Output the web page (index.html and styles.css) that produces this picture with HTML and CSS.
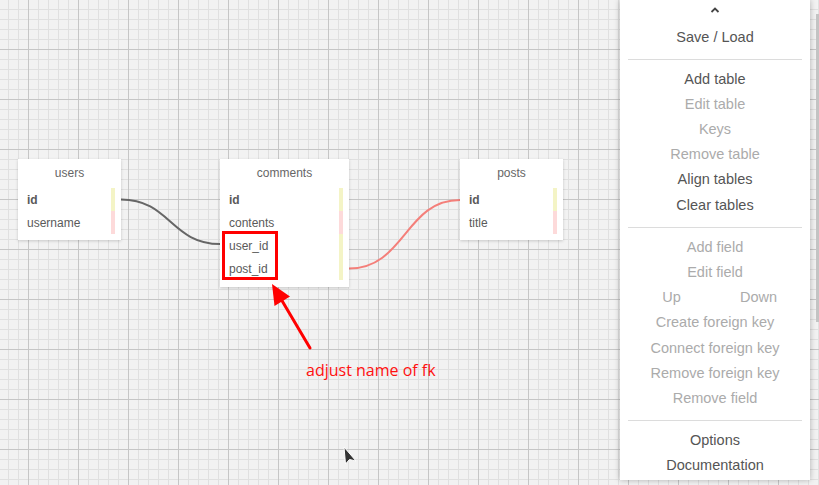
FILE: index.html
```html
<!DOCTYPE html>
<html>
<head>
<meta charset="utf-8">
<link rel="stylesheet" href="styles.css">
</head>
<body>
<div class="canvas">
  <svg class="links" width="819" height="485" viewBox="0 0 819 485">
    <path d="M121 199.5 C170 199.5 171 244 220 244" class="link link-dark"/>
    <path d="M349 268.5 C405 268.5 405 200 460 200" class="link link-red"/>
  </svg>

  <div class="table t-users">
    <div class="tname">users</div>
    <div class="row"><span class="fname pk">id</span><i class="key k-pk"></i></div>
    <div class="row"><span class="fname">username</span><i class="key k-field"></i></div>
  </div>

  <div class="table t-comments">
    <div class="tname">comments</div>
    <div class="row"><span class="fname pk">id</span><i class="key k-pk"></i></div>
    <div class="row"><span class="fname">contents</span><i class="key k-field"></i></div>
    <div class="row"><span class="fname">user_id</span><i class="key k-pk"></i></div>
    <div class="row"><span class="fname">post_id</span><i class="key k-pk"></i></div>
  </div>

  <div class="table t-posts">
    <div class="tname">posts</div>
    <div class="row"><span class="fname pk">id</span><i class="key k-pk"></i></div>
    <div class="row"><span class="fname">title</span><i class="key k-field"></i></div>
  </div>

  <svg class="annot" width="819" height="485" viewBox="0 0 819 485">
    <rect x="223.5" y="232.5" width="53" height="46" fill="none" stroke="#ff0000" stroke-width="3"/>
    <line x1="310" y1="348" x2="281" y2="299" stroke="#ff0000" stroke-width="3" stroke-linecap="round"/>
    <polygon points="272,284 290,296.6 274.5,306" fill="#ff0000"/>
  </svg>
  <div class="note">adjust name of fk</div>

  <div class="menu">
    <div class="collapse">
      <svg width="10" height="6" viewBox="0 0 10 6"><path d="M1.5 5 L5 1.5 L8.5 5" fill="none" stroke="#444" stroke-width="1.8"/></svg>
    </div>
    <div class="item">Save / Load</div>
    <div class="sep"></div>
    <div class="item">Add table</div>
    <div class="item off">Edit table</div>
    <div class="item off">Keys</div>
    <div class="item off">Remove table</div>
    <div class="item">Align tables</div>
    <div class="item">Clear tables</div>
    <div class="sep"></div>
    <div class="item off">Add field</div>
    <div class="item off">Edit field</div>
    <div class="item-pair">
      <div class="item off">Up</div>
      <div class="item off">Down</div>
    </div>
    <div class="item off">Create foreign key</div>
    <div class="item off">Connect foreign key</div>
    <div class="item off">Remove foreign key</div>
    <div class="item off">Remove field</div>
    <div class="sep"></div>
    <div class="item">Options</div>
    <div class="item">Documentation</div>
  </div>

  <div class="scroll-thumb"></div>

  <svg class="pointer" width="16" height="22" viewBox="0 0 16 22">
    <polygon points="1,1 2.5,18 6.5,13.5 13,15" fill="#333" stroke="#fff" stroke-width="1" stroke-linejoin="round"/>
  </svg>
</div>
</body>
</html>
```

FILE: styles.css
```css
html, body {
  margin: 0;
  padding: 0;
  width: 819px;
  height: 485px;
  overflow: hidden;
}

body {
  font-family: "Liberation Sans", Arial, sans-serif;
}

.canvas {
  position: relative;
  width: 819px;
  height: 485px;
  background-color: #f2f2f2;
  background-image:
    linear-gradient(to right, #c6c6c6 1px, transparent 1px),
    linear-gradient(to bottom, #c6c6c6 1px, transparent 1px),
    linear-gradient(to right, #e0e0e0 1px, transparent 1px),
    linear-gradient(to bottom, #e0e0e0 1px, transparent 1px);
  background-size: 50px 50px, 50px 50px, 10px 10px, 10px 10px;
  background-position: 28px 0, 0 49px, 8px 0, 0 9px;
}

.links, .annot {
  position: absolute;
  left: 0;
  top: 0;
  pointer-events: none;
}

.link {
  fill: none;
  stroke-width: 2;
}
.link-dark { stroke: #666; }
.link-red { stroke: #f47f7a; }

.table {
  position: absolute;
  top: 159px;
  background: #fff;
  box-shadow: 0 1px 3px rgba(0, 0, 0, 0.18);
  padding-bottom: 6px;
  font-size: 12px;
  color: #5a5a5a;
}
.t-users { left: 18px; width: 103px; }
.t-comments { left: 220px; width: 129px; padding-bottom: 7px; }
.t-posts { left: 460px; width: 103px; }

.tname {
  height: 29px;
  line-height: 29px;
  text-align: center;
  color: #666;
}

.row {
  display: flex;
  height: 23px;
  align-items: center;
  padding-left: 9px;
}
.fname.pk { font-weight: bold; }

.key {
  margin-left: auto;
  margin-right: 6px;
  width: 4px;
  align-self: stretch;
}
.k-pk { background: #f4f4c6; }
.k-field { background: #fddada; }

.note {
  position: absolute;
  left: 306px;
  top: 359px;
  font-family: "Open Sans", sans-serif;
  font-size: 16px;
  line-height: 22px;
  color: #ff1010;
}

.menu {
  position: absolute;
  left: 620px;
  top: 0;
  width: 190px;
  padding: 0 0 1px;
  background: #fff;
  box-shadow: 0 0 6px rgba(0, 0, 0, 0.28);
  font-size: 14.5px;
  color: #555;
}

.collapse {
  height: 24.5px;
  display: flex;
  justify-content: center;
  padding-top: 7px;
  box-sizing: border-box;
}
.collapse svg { display: block; }

.item {
  height: 25.2px;
  line-height: 25.2px;
  text-align: center;
  white-space: nowrap;
}
.item.off { color: #ababab; }

.item-pair {
  display: flex;
  padding: 0 8px;
}
.item-pair .item { flex: 1; }

.sep {
  margin: 9px 8px 7px;
  border-top: 1px solid #dcdcdc;
}

.scroll-thumb {
  position: absolute;
  left: 816px;
  top: 14px;
  width: 3px;
  height: 308px;
  background: #c3c3c3;
}

.pointer {
  position: absolute;
  left: 343px;
  top: 446px;
}
```
